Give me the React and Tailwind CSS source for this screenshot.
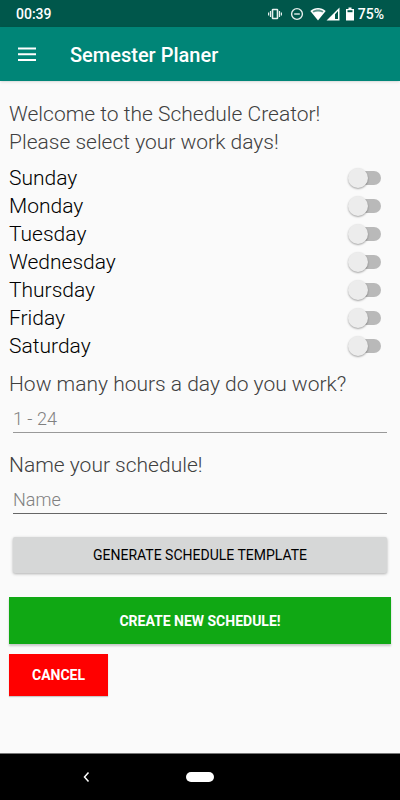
const days = ["Sunday", "Monday", "Tuesday", "Wednesday", "Thursday", "Friday", "Saturday"];

function StatusBar() {
  return (
    <div className="flex h-[27px] items-center justify-between bg-[#00574b] pl-4 pr-4 text-sm font-medium text-white">
      <span>00:39</span>
      <div className="flex items-center">
        <svg className="mr-2 h-3.5 w-3.5" viewBox="0 0 14 14" fill="none" stroke="#e6efed">
          <rect x="4.5" y="2.5" width="5" height="9" rx="0.5" strokeWidth="1.6" />
          <path d="M2.5 4v6M11.5 4v6M.6 5.5v3M13.4 5.5v3" strokeWidth="1.2" />
        </svg>
        <svg className="mr-1.5 h-3.5 w-3.5" viewBox="0 0 14 14" fill="none" stroke="#e6efed" strokeWidth="1.4">
          <circle cx="7" cy="7" r="5.4" />
          <path d="M4.2 7h5.6" />
        </svg>
        <svg className="h-3.5 w-4" viewBox="0 0 16 14" fill="none">
          <path d="M.3 4C4.600.1 11.400.1 15.700 4L8 13.500Z" fill="#fff" />
          <path d="M2.500 4.300C5.500 2 10.500 2 13.500 4.300L12.500 5.500C10 4 6 4 3.500 5.500Z" fill="#5d938b" />
        </svg>
        <svg className="mr-1.5 h-3.5 w-3.5" viewBox="0 0 14 14">
          <path d="M13.500.5v13H.5ZM12 4 9 7.300V12H12Z" fill="#fff" fillRule="evenodd" />
        </svg>
        <svg className="mr-1 h-3.5 w-2" viewBox="0 0 8 14">
          <path d="M2.500 .5h3V2H8v11.500H0V2h2.500Z" fill="#fff" />
          <path d="M1.500 3.200h5v2H1.500Z" fill="#00574b" />
        </svg>
        <span>75%</span>
      </div>
    </div>
  );
}

function AppBar() {
  return (
    <header className="flex h-[54px] items-center bg-[#008577] pl-4 shadow-sm">
      <button aria-label="Open menu" className="flex h-6 w-6 items-center justify-center">
        <svg className="h-6 w-6" viewBox="0 0 24 24" stroke="#fff" strokeWidth="2">
          <path d="M2 6.500h18M2 12.200h18M2 18h18" />
        </svg>
      </button>
      <h1 className="ml-[30px] pt-0.5 text-xl font-medium text-white">Semester Planer</h1>
    </header>
  );
}

function DayRow({ day }) {
  return (
    <label className="flex h-7 items-center justify-between pr-2.5 text-black">
      {day}
      <input
        type="checkbox"
        role="switch"
        className="relative h-3.5 w-[30px] appearance-none rounded-full bg-[#b9b9b9]
                   before:absolute before:-left-[3px] before:-top-[3px] before:h-5 before:w-5
                   before:rounded-full before:bg-[#ececec] before:shadow-[0_1px_2px_rgba(0,0,0,0.35)]
                   checked:bg-[#80c2bb] checked:before:left-[13px] checked:before:bg-[#008577]"
      />
    </label>
  );
}

function Field({ id, label, placeholder, line }) {
  return (
    <div>
      <label htmlFor={id} className="block">{label}</label>
      <div className="px-1">
        <input
          id={id}
          placeholder={placeholder}
          className={`${line} h-[35px] w-full border-b bg-transparent pt-1.5 text-lg text-black outline-none placeholder:text-[#808080]`}
        />
      </div>
    </div>
  );
}

export default function App() {
  return (
    <div className="flex min-h-screen flex-col bg-[#fafafa] font-['Roboto',sans-serif]">
      <StatusBar />
      <AppBar />

      <main className="flex-1 px-[9px] pt-[19px] text-[21px] leading-7 font-light text-[#404040]">
        <p>
          Welcome to the Schedule Creator!
          <br />
          Please select your work days!
        </p>

        <div className="mt-2">
          {days.map(day => (
            <DayRow key={day} day={day} />
          ))}
        </div>

        <div className="mt-2.5 space-y-[18px]">
          <Field id="hours" label="How many hours a day do you work?" placeholder="1 - 24" line="border-[#999999]" />
          <Field id="name" label="Name your schedule!" placeholder="Name" line="border-[#666666]" />
        </div>

        <div className="mt-[23px] px-1">
          <button className="block h-9 w-full rounded-xs bg-[#d6d7d7] text-sm font-normal text-black shadow-[0_1px_3px_rgba(0,0,0,0.3)]">
            GENERATE SCHEDULE TEMPLATE
          </button>
        </div>
        <button className="mt-6 block h-[47px] w-full bg-[#10a814] text-sm font-bold text-white shadow-[0_2px_2px_rgba(0,0,0,0.2)]">
          CREATE NEW SCHEDULE!
        </button>
        <button className="mt-2.5 block h-[42px] bg-[#ff0000] px-[23px] text-sm font-bold text-white shadow-[0_1px_1px_rgba(0,0,0,0.2)]">
          CANCEL
        </button>
      </main>

      <nav className="grid h-[47px] grid-cols-[1fr_28px_1fr] items-center border-t border-[#777777] bg-black">
        <button aria-label="Back" className="ml-20 flex h-6 w-3 items-center justify-center">
          <svg className="h-3 w-3" viewBox="0 0 12 12" fill="none" stroke="#fff" strokeWidth="1.5">
            <path d="M8.500 1.500 4.500 6l4 4.500" />
          </svg>
        </button>
        <button aria-label="Home" className="h-2.5 w-7 rounded-full bg-white" />
      </nav>
    </div>
  );
}
